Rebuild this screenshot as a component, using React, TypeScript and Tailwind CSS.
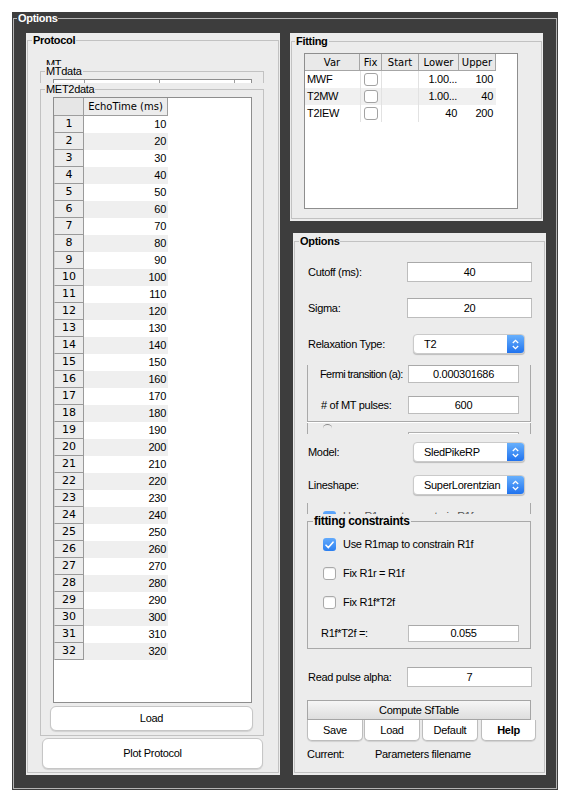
import type { ReactNode } from 'react'

const echoTimes = Array.from({ length: 32 }, (_, i) => (i + 1) * 10)

const fitRows = [
  { name: 'MWF', lower: '1.00...', upper: '100' },
  { name: 'T2MW', lower: '1.00...', upper: '40' },
  { name: 'T2IEW', lower: '40', upper: '200' },
]

function Field({ value, className }: { value: string; className: string }) {
  return (
    <div
      className={`flex items-center justify-center bg-white border border-[#bdbdbd] border-t-[#a9a9a9] ${className}`}
    >
      {value}
    </div>
  )
}

function Popup({ value }: { value: string }) {
  return (
    <div className="flex h-[20px] w-[112px] rounded-[4px] bg-white border border-[#cacaca] shadow-[0_1px_1px_rgba(0,0,0,0.2)] overflow-hidden">
      <div className="flex-1 flex items-center pl-[10px] whitespace-nowrap">{value}</div>
      <div className="w-[17px] shrink-0 flex items-center justify-center bg-gradient-to-b from-[#68b0fc] to-[#1f72ee]">
        <svg width="9" height="13" viewBox="0 0 9 13">
          <path
            d="M1.8 5 L4.5 2.3 L7.2 5 M1.8 8 L4.5 10.7 L7.2 8"
            stroke="white"
            strokeWidth="1.3"
            fill="none"
          />
        </svg>
      </div>
    </div>
  )
}

function Check({ checked }: { checked?: boolean }) {
  if (checked) {
    return (
      <div className="w-[13px] h-[13px] shrink-0 rounded-[3px] bg-gradient-to-b from-[#62aafc] to-[#2b7ff0] flex items-center justify-center">
        <svg width="9" height="8" viewBox="0 0 9 8">
          <path
            d="M1 4.2 L3.4 6.6 L8 1.2"
            stroke="white"
            strokeWidth="1.6"
            fill="none"
            strokeLinecap="round"
            strokeLinejoin="round"
          />
        </svg>
      </div>
    )
  }
  return (
    <div className="w-[13px] h-[13px] shrink-0 rounded-[3px] bg-white border border-[#a9a9a9] shadow-[inset_0_1px_1px_rgba(0,0,0,0.08)]" />
  )
}

function MacButton({ children, className }: { children: ReactNode; className: string }) {
  return (
    <div
      className={`flex items-center justify-center bg-white border border-[#c6c6c6] rounded-[6px] shadow-[0_1px_1px_rgba(0,0,0,0.12)] ${className}`}
    >
      {children}
    </div>
  )
}

function EchoTable() {
  return (
    <div className="ml-[12px] mt-[1px] w-[199px] h-[606px] border border-[#8e8e8e] bg-white overflow-hidden">
      <div className="flex h-[18px] font-['DejaVu_Sans',sans-serif] text-[10px] tracking-normal">
        <div className="w-[30px] bg-[#e6e6e6] border-r border-b border-[#9d9d9d]" />
        <div className="w-[84px] bg-[#ececec] border-r border-b border-[#9d9d9d] flex items-center justify-center">
          EchoTime (ms)
        </div>
      </div>
      {echoTimes.map((t, i) => (
        <div key={t} className="flex h-[17px]">
          <div className="w-[30px] bg-[#ececec] border-l border-l-[#d4d4d4] border-r border-b border-[#9a9a9a] flex items-center justify-center font-['DejaVu_Sans',sans-serif] text-[11px] tracking-normal">
            {i + 1}
          </div>
          <div
            className={`w-[84px] flex items-center justify-end pr-[2px] ${i % 2 === 1 ? 'bg-[#efefef]' : 'bg-white'}`}
          >
            {t}
          </div>
        </div>
      ))}
    </div>
  )
}

function FitTable() {
  return (
    <div className="ml-[12px] mt-[5px] w-[214px] h-[156px] border border-[#8e8e8e] bg-white">
      <div className="flex h-[17px] font-['DejaVu_Sans',sans-serif] text-[10px] tracking-normal">
        <div className="w-[55px] bg-[#e9e9e9] border-r border-b border-[#a6a6a6] flex items-center justify-center">Var</div>
        <div className="w-[22px] bg-[#e9e9e9] border-r border-b border-[#a6a6a6] flex items-center justify-center">Fix</div>
        <div className="w-[37px] bg-[#e9e9e9] border-r border-b border-[#a6a6a6] flex items-center justify-center">Start</div>
        <div className="w-[40px] bg-[#e9e9e9] border-r border-b border-[#a6a6a6] flex items-center justify-center">Lower</div>
        <div className="w-[37px] bg-[#e9e9e9] border-r border-b border-[#a6a6a6] flex items-center justify-center">Upper</div>
      </div>
      {fitRows.map((r, i) => (
        <div key={r.name} className={`flex h-[17px] w-[191px] ${i === 1 ? 'bg-[#f0f0f0]' : 'bg-white'}`}>
          <div className="w-[55px] flex items-center pl-[2px]">{r.name}</div>
          <div className="w-[22px] flex items-center justify-center border-x border-[#e2e2e2]">
            <div className="w-[14px] h-[13px] rounded-[3px] bg-white border border-[#a3a3a3]" />
          </div>
          <div className="w-[37px] border-r border-[#e2e2e2]" />
          <div className="w-[40px] flex items-center justify-end pr-[2px]">{r.lower}</div>
          <div className="w-[37px] flex items-center justify-end pr-[3px]">{r.upper}</div>
        </div>
      ))}
    </div>
  )
}

function ProtocolPanel() {
  return (
    <div className="w-[254px] h-[742px] bg-[#ececec] pt-[1px] px-[1px] pb-[2px]">
      <fieldset className="h-full min-w-0 border border-[#c2c2c2]">
        <legend className="ml-[4px] px-[1px] font-bold leading-[13px]">Protocol</legend>
        <div className="pt-[11px] pl-[12px]">
          <div className="h-[7px] overflow-hidden pl-[6px] leading-[13px]">MT</div>
          <fieldset className="h-[18px] w-[224px] min-w-0 border border-b-0 border-[#c2c2c2] overflow-hidden">
            <legend className="ml-[4px] px-[1px] leading-[13px]">MTdata</legend>
            <div className="ml-[12px] mt-[1px] w-[199px] h-[10px] border border-[#8e8e8e] bg-white flex">
              <div className="w-[31px] border-r border-[#9d9d9d]" />
              <div className="w-[75px] border-r border-[#9d9d9d]" />
              <div className="w-[75px] border-r border-[#9d9d9d]" />
            </div>
          </fieldset>
          <fieldset className="w-[224px] min-w-0 border border-[#c2c2c2] pb-[4px]">
            <legend className="ml-[4px] px-[1px] leading-[13px]">MET2data</legend>
            <EchoTable />
            <MacButton className="ml-[9px] mt-[3px] w-[203px] h-[25px]">Load</MacButton>
          </fieldset>
          <MacButton className="ml-[2px] mt-[2px] w-[221px] h-[31px]">Plot Protocol</MacButton>
        </div>
      </fieldset>
    </div>
  )
}

function FittingPanel() {
  return (
    <div className="w-[253px] h-[188px] bg-[#ececec] pt-[2px] px-[1px] pb-[2px]">
      <fieldset className="h-full min-w-0 border border-[#c2c2c2]">
        <legend className="ml-[3px] px-[1px] font-bold leading-[13px]">Fitting</legend>
        <FitTable />
      </fieldset>
    </div>
  )
}

function OptionsPanel() {
  return (
    <div className="ml-[3px] mt-[12px] w-[253px] h-[542px] bg-[#ececec] pt-[2px] px-[1px] pb-[2px]">
      <fieldset className="h-full min-w-0 border border-[#c2c2c2]">
        <legend className="ml-[4px] px-[1px] font-bold leading-[13px]">Options</legend>
        <div className="pl-[12px]">
          <div className="mt-[14px] flex items-center h-[20px]">
            <div className="w-[100px] pl-[1px]">Cutoff (ms):</div>
            <Field value="40" className="w-[125px] h-[20px]" />
          </div>
          <div className="mt-[16px] flex items-center h-[20px]">
            <div className="w-[100px] pl-[1px]">Sigma:</div>
            <Field value="20" className="w-[125px] h-[20px]" />
          </div>
          <div className="mt-[16px] flex items-center h-[20px]">
            <div className="w-[106px] pl-[1px]">Relaxation Type:</div>
            <Popup value="T2" />
          </div>

          {/* MT sub panel, partly covered */}
          <div className="mt-[4px] w-[224px] border-x border-b border-[#a9a9a9] shadow-[0_1px_0_white] pb-[7px]">
            <div className="mt-[11px] flex items-center h-[18px]">
              <div className="w-[100px] shrink-0 pl-[12px] whitespace-nowrap tracking-[-0.6px]">Fermi transition (a):</div>
              <Field value="0.000301686" className="w-[111px] h-[18px]" />
            </div>
            <div className="mt-[13px] flex items-center h-[18px]">
              <div className="w-[100px] shrink-0 pl-[13px] whitespace-nowrap"># of MT pulses:</div>
              <Field value="600" className="w-[111px] h-[18px]" />
            </div>
          </div>
          <div className="mt-[1px] w-[224px] h-[11px] border-x border-[#a9a9a9] overflow-hidden flex pl-[15px]">
            <div className="mt-[1px] w-[9px] h-[6px] rounded-t-full border-t border-[#8a8a8a]" />
            <div className="ml-[76px] mt-[9px] w-[111px] h-[18px] bg-white border border-[#b0b0b0]" />
          </div>

          <div className="mt-[8px] flex items-center h-[20px]">
            <div className="w-[106px] pl-[1px]">Model:</div>
            <Popup value="SledPikeRP" />
          </div>
          <div className="mt-[13px] flex items-center h-[20px]">
            <div className="w-[106px] pl-[1px]">Lineshape:</div>
            <Popup value="SuperLorentzian" />
          </div>

          <div className="mt-[8px] w-[224px] h-[11px] border-x border-[#a9a9a9] overflow-hidden flex items-start gap-[7px] pl-[15px] pt-[8px]">
            <Check checked />
            <div className="leading-[13px] mt-[-1px] text-[#555] whitespace-nowrap">Use R1map to constrain R1f</div>
          </div>

          <fieldset className="w-[224px] min-w-0 border border-[#a9a9a9] pb-[6px]">
            <legend className="ml-[5px] px-[1px] font-bold text-[12px] leading-[14px]">fitting constraints</legend>
            <div className="mt-[10px] flex items-center gap-[7px] pl-[15px] h-[13px]">
              <Check checked />
              <span>Use R1map to constrain R1f</span>
            </div>
            <div className="mt-[16px] flex items-center gap-[7px] pl-[15px] h-[13px]">
              <Check />
              <span>Fix R1r = R1f</span>
            </div>
            <div className="mt-[16px] flex items-center gap-[7px] pl-[15px] h-[13px]">
              <Check />
              <span>Fix R1f*T2f</span>
            </div>
            <div className="mt-[16px] flex items-center h-[17px]">
              <div className="w-[100px] pl-[13px]">R1f*T2f =:</div>
              <Field value="0.055" className="w-[111px] h-[17px]" />
            </div>
          </fieldset>

          <div className="mt-[18px] flex items-center h-[20px]">
            <div className="w-[100px] pl-[1px]">Read pulse alpha:</div>
            <Field value="7" className="w-[125px] h-[20px]" />
          </div>

          <div className="mt-[13px] w-[224px] h-[20px] flex items-center justify-center border border-[#a5a5a5] bg-gradient-to-b from-[#f6f6f6] to-[#dedede]">
            Compute SfTable
          </div>
          <div className="flex h-[21px]">
            <div className="w-[56px] flex items-center justify-center bg-white border border-t-0 border-[#bdbdbd] rounded-b-[5px] shadow-[0_1px_1px_rgba(0,0,0,0.12)]">Save</div>
            <div className="ml-[1px] w-[56px] flex items-center justify-center bg-white border border-t-0 border-[#bdbdbd] rounded-b-[5px] shadow-[0_1px_1px_rgba(0,0,0,0.12)]">Load</div>
            <div className="ml-[2px] w-[56px] flex items-center justify-center bg-white border border-t-0 border-[#bdbdbd] rounded-b-[5px] shadow-[0_1px_1px_rgba(0,0,0,0.12)]">Default</div>
            <div className="ml-[3px] w-[55px] flex items-center justify-center bg-white border border-t-0 border-[#bdbdbd] rounded-b-[5px] shadow-[0_1px_1px_rgba(0,0,0,0.12)] font-bold">Help</div>
          </div>
          <div className="mt-[7px] flex leading-[13px]">
            <div className="w-[68px]">Current:</div>
            <div>Parameters filename</div>
          </div>
        </div>
      </fieldset>
    </div>
  )
}

export default function App() {
  return (
    <div className="w-[569px] h-[801px] bg-white pt-[12px] pl-[12px] font-['Liberation_Sans',Arial,sans-serif] text-[11px] tracking-[-0.3px] text-black">
      <div className="w-[546px] h-[778px] bg-[#3d3d3d] pl-[1px] pr-[1px] pb-[1px]">
        <fieldset className="h-full min-w-0 border border-[#b4b4b4]">
          <legend className="ml-[3px] px-[1px] text-white font-bold leading-[13px]">Options</legend>
          <div className="flex pl-[12px] pt-[8px] gap-[10px]">
            <ProtocolPanel />
            <div className="flex flex-col">
              <FittingPanel />
              <OptionsPanel />
            </div>
          </div>
        </fieldset>
      </div>
    </div>
  )
}
